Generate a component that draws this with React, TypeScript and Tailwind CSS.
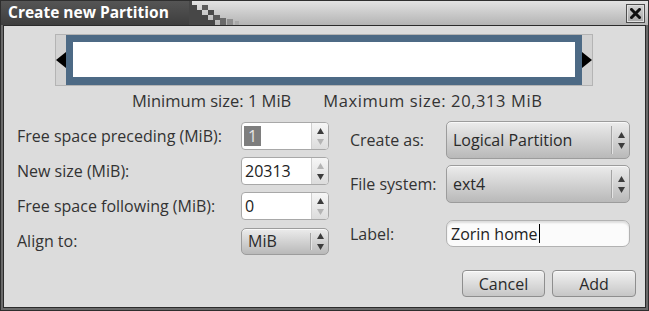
import React from 'react';

const ARROW_ON = '#3c3c3c';
const ARROW_OFF = '#b4b4b4';

function StepArrows({ up = true, down = true }: { up?: boolean; down?: boolean }) {
  return (
    <div className="flex flex-col items-center gap-[5px]">
      <svg width="7" height="6" viewBox="0 0 7 6">
        <polygon points="3.5,0 7,6 0,6" fill={up ? ARROW_ON : ARROW_OFF} />
      </svg>
      <svg width="7" height="6" viewBox="0 0 7 6">
        <polygon points="0,0 7,0 3.5,6" fill={down ? ARROW_ON : ARROW_OFF} />
      </svg>
    </div>
  );
}

function SpinButton({
  value,
  selected = false,
  up = true,
  down = true,
}: {
  value: string;
  selected?: boolean;
  up?: boolean;
  down?: boolean;
}) {
  return (
    <div className="flex h-[28px] w-[88px] overflow-hidden rounded-[4px] border border-[#a8a8a8] bg-white">
      <div className="flex flex-1 items-center pl-[2px]">
        {selected ? (
          <span className="bg-[#7e7e7e] px-[4px] leading-[20px] text-[#e6e6e6]">{value}</span>
        ) : (
          <span className="pl-[1px] text-[#222]">{value}</span>
        )}
      </div>
      <div className="flex w-[17px] items-center justify-center border-l border-[#cfcfcf] bg-gradient-to-b from-[#f6f6f6] to-[#dcdcdc]">
        <StepArrows up={up} down={down} />
      </div>
    </div>
  );
}

function Combo({ value, className }: { value: string; className: string }) {
  return (
    <div
      className={`flex overflow-hidden rounded-[5px] border border-[#9c9c9c] bg-gradient-to-b from-[#ececec] to-[#b9b9b9] shadow-[inset_0_1px_0_#f8f8f8] ${className}`}
    >
      <div className="flex flex-1 items-center pl-[6px] text-[#2a2a2a]">{value}</div>
      <div className="my-[4px] w-px bg-[#a4a4a4]" />
      <div className="my-[4px] w-px bg-[#e4e4e4]" />
      <div className="flex w-[16px] items-center justify-center">
        <StepArrows />
      </div>
    </div>
  );
}

function Button({ label, className }: { label: string; className: string }) {
  return (
    <div
      className={`flex h-[27px] items-center justify-center rounded-[4px] border border-[#8e8e8e] bg-gradient-to-b from-[#f2f2f2] to-[#c6c6c6] text-[#2a2a2a] shadow-[inset_0_1px_0_#fbfbfb] ${className}`}
    >
      {label}
    </div>
  );
}

function TitleStairs() {
  return (
    <svg width="60" height="24" viewBox="0 0 60 24" className="block">
      <polygon
        points="0,0 3,0 3,4 8,4 8,9 13,9 13,14 19,14 19,19 26,19 26,24 0,24"
        fill="#474747"
      />
      <rect x="13" y="4" width="6" height="5" fill="#5c5c5c" />
      <rect x="19" y="9" width="6" height="5" fill="#4a4a4a" />
      <rect x="24" y="14" width="7" height="5" fill="#5a5a5a" />
      <rect x="31" y="17" width="6" height="7" fill="#6a6a6a" />
      <rect x="38" y="18" width="6" height="6" fill="#8e8e8e" />
      <rect x="46" y="20" width="4" height="4" fill="#a8a8a8" />
    </svg>
  );
}

function CloseButton() {
  return (
    <div className="flex h-[19px] w-[19px] items-center justify-center border border-[#4e4e4e] bg-gradient-to-b from-[#d2d2d2] to-[#a8a8a8] shadow-[inset_0_0_0_1px_#e0e0e0]">
      <svg width="11" height="11" viewBox="0 0 11 11">
        <path d="M1.5 1.5 L9.5 9.5 M9.5 1.5 L1.5 9.5" stroke="#111" strokeWidth="3" strokeLinecap="square" />
      </svg>
    </div>
  );
}

function PartitionBar() {
  return (
    <div className="ml-[51px] mt-[8px] flex h-[52px] w-[538px] border border-[#b4b4b4] bg-[#d2d2d2]">
      <div className="flex w-[10px] items-center justify-start">
        <svg width="10" height="16" viewBox="0 0 10 16">
          <polygon points="10,0 10,16 0,8" fill="#000" />
        </svg>
      </div>
      <div className="flex-1 bg-[#4d6a85] px-[7px] pb-[8px] pt-[7px]">
        <div className="h-full bg-white" />
      </div>
      <div className="flex w-[10px] items-center justify-end">
        <svg width="10" height="16" viewBox="0 0 10 16">
          <polygon points="0,0 0,16 10,8" fill="#000" />
        </svg>
      </div>
    </div>
  );
}

export default function App() {
  return (
    <div className="flex h-[311px] w-[649px] flex-col border border-[#2e2e2e] bg-[#6a6a6a] font-['Open_Sans',sans-serif] text-[16px] text-[#333]">
      {/* Title bar */}
      <div className="flex h-[24px] shrink-0">
        <div className="flex w-[188px] items-center bg-gradient-to-b from-[#555] to-[#3e3e3e] pl-[7px]">
          <span className="text-[15.5px] font-bold leading-none text-white">Create new Partition</span>
        </div>
        <div className="bg-gradient-to-b from-[#e2e2e2] to-[#b4b4b4]">
          <TitleStairs />
        </div>
        <div className="flex flex-1 items-center justify-end bg-gradient-to-b from-[#e2e2e2] to-[#b4b4b4] pr-[3px]">
          <CloseButton />
        </div>
      </div>

      {/* Body */}
      <div className="mx-[2px] mb-[2px] flex flex-1 flex-col border border-[#2b2b2b] bg-[#dcdcdc]">
        <PartitionBar />

        <div className="mt-[6px] flex h-[18px] items-center pl-[128px] text-[16.5px] leading-none">
          <span>Minimum size: 1 MiB</span>
          <span className="ml-[32px] tracking-[0.6px]">Maximum size: 20,313 MiB</span>
        </div>

        <div className="mt-[12px] flex pl-[13px]">
          {/* Left column */}
          <div className="flex flex-col gap-[7px]">
            {[
              { label: 'Free space preceding (MiB):', el: <SpinButton value="1" selected up down={false} /> },
              { label: 'New size (MiB):', el: <SpinButton value="20313" up={false} down /> },
              { label: 'Free space following (MiB):', el: <SpinButton value="0" up down={false} /> },
            ].map((row) => (
              <div key={row.label} className="flex h-[28px] items-center">
                <div className="w-[224px]">{row.label}</div>
                {row.el}
              </div>
            ))}
            <div className="flex h-[28px] items-center">
              <div className="w-[224px]">Align to:</div>
              <Combo value="MiB" className="h-[27px] w-[88px]" />
            </div>
          </div>

          {/* Right column */}
          <div className="ml-[21px] -mt-[1px] flex flex-col">
            <div className="flex h-[38px] items-center">
              <div className="w-[96px]">Create as:</div>
              <Combo value="Logical Partition" className="h-[38px] w-[184px]" />
            </div>
            <div className="mt-[6px] flex h-[38px] items-center">
              <div className="w-[96px]">File system:</div>
              <Combo value="ext4" className="h-[38px] w-[184px]" />
            </div>
            <div className="mt-[17px] flex h-[27px] items-center">
              <div className="w-[96px]">Label:</div>
              <div className="flex h-[27px] w-[184px] items-center rounded-[7px] border border-[#b2b2b2] bg-[#fbfbfb] pl-[4px] text-[#222] shadow-[inset_0_2px_2px_rgba(0,0,0,0.12)]">
                Zorin home<span className="ml-px inline-block h-[19px] w-px bg-black" />
              </div>
            </div>
          </div>
        </div>

        <div className="mt-[15px] flex justify-end gap-[7px] pr-[9px]">
          <Button label="Cancel" className="w-[83px]" />
          <Button label="Add" className="w-[84px]" />
        </div>
      </div>
    </div>
  );
}
